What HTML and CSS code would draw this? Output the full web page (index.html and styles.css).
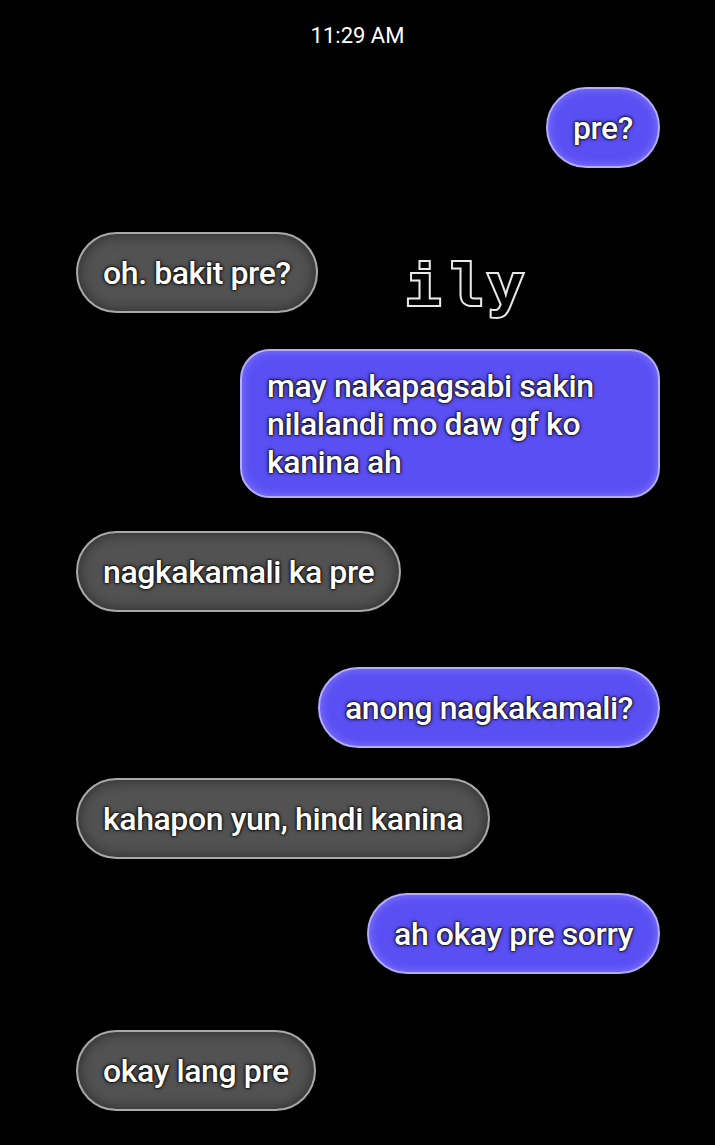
FILE: index.html
```html
<!DOCTYPE html>
<html lang="en">
<head>
  <meta charset="UTF-8" />
  <meta name="viewport" content="width=device-width, initial-scale=1" />
  <title>Messages</title>
  <link rel="stylesheet" href="styles.css">
</head>
<body>
  <div class="screen">
    <div class="time">11:29 AM</div>

    <div class="thread">
      <div class="row sent first">
        <div class="bubble blue">pre?</div>
      </div>

      <div class="row received top gap-64">
        <div class="bubble grey">oh. bakit pre?</div>
        <div class="ily">ily</div>
      </div>

      <div class="row sent gap-36">
        <div class="bubble blue multi">may nakapagsabi sakin<br>nilalandi mo daw gf ko<br>kanina ah</div>
      </div>

      <div class="row received gap-33">
        <div class="bubble grey">nagkakamali ka pre</div>
      </div>

      <div class="row sent gap-55">
        <div class="bubble blue">anong nagkakamali?</div>
      </div>

      <div class="row received gap-30">
        <div class="bubble grey">kahapon yun, hindi kanina</div>
      </div>

      <div class="row sent gap-34">
        <div class="bubble blue">ah okay pre sorry</div>
      </div>

      <div class="row received gap-56">
        <div class="bubble grey">okay lang pre</div>
      </div>
    </div>
  </div>
</body>
</html>
```

FILE: styles.css
```css
:root {
  --bg: #000000;
  --blue: #5a4ff3;
  --blue-edge: #b3adff;
  --grey: #525252;
  --grey-edge: #a8a8a8;
  --text: #ffffff;
}

body, html {
  margin: 0;
  padding: 0;
  background: var(--bg);
  color: var(--text);
  font-family: Roboto, 'Liberation Sans', sans-serif;
}

.screen {
  width: 715px;
  min-height: 1145px;
  box-sizing: border-box;
  padding-top: 23px;
}

.time {
  text-align: center;
  font-size: 22px;
  line-height: 26px;
}

.thread {
  display: flex;
  flex-direction: column;
  padding: 0 55px 0 76px;
}

.row {
  display: flex;
  align-items: center;
}

.row.top {
  align-items: flex-start;
}

.row.sent {
  justify-content: flex-end;
}

/* spacing between messages is uneven in the original */
.row.first  { margin-top: 38px; }
.row.gap-64 { margin-top: 64px; }
.row.gap-56 { margin-top: 56px; }
.row.gap-55 { margin-top: 55px; }
.row.gap-36 { margin-top: 36px; }
.row.gap-34 { margin-top: 34px; }
.row.gap-33 { margin-top: 33px; }
.row.gap-30 { margin-top: 30px; }

.bubble {
  font-size: 32px;
  font-weight: 500;
  line-height: 38px;
  letter-spacing: -0.4px;
  padding: 19.5px 25px;
  border-radius: 41px;
  border: 2px solid;
  text-shadow:
    0 0 2px #000,
    0 0 2px #000,
    0 0 4px rgba(0, 0, 0, 0.8);
}

.bubble.blue {
  background: var(--blue);
  border-color: var(--blue-edge);
  box-shadow: inset 0 0 10px rgba(170, 160, 255, 0.55);
}

.bubble.grey {
  background: var(--grey);
  border-color: var(--grey-edge);
  box-shadow: inset 0 0 14px rgba(0, 0, 0, 0.5);
}

.bubble.multi {
  padding: 15.5px 25px;
  border-radius: 30px;
  width: 366px;
}

/* outlined monospace word next to the grey bubble */
.ily {
  font-family: 'Liberation Mono', 'DejaVu Sans Mono', monospace;
  font-size: 60px;
  font-weight: 700;
  line-height: 60px;
  color: #000;
  -webkit-text-stroke: 4px #e8e8e8;
  paint-order: stroke fill;
  margin: 27px 0 -20px 88px;
  letter-spacing: 5px;
}
```
